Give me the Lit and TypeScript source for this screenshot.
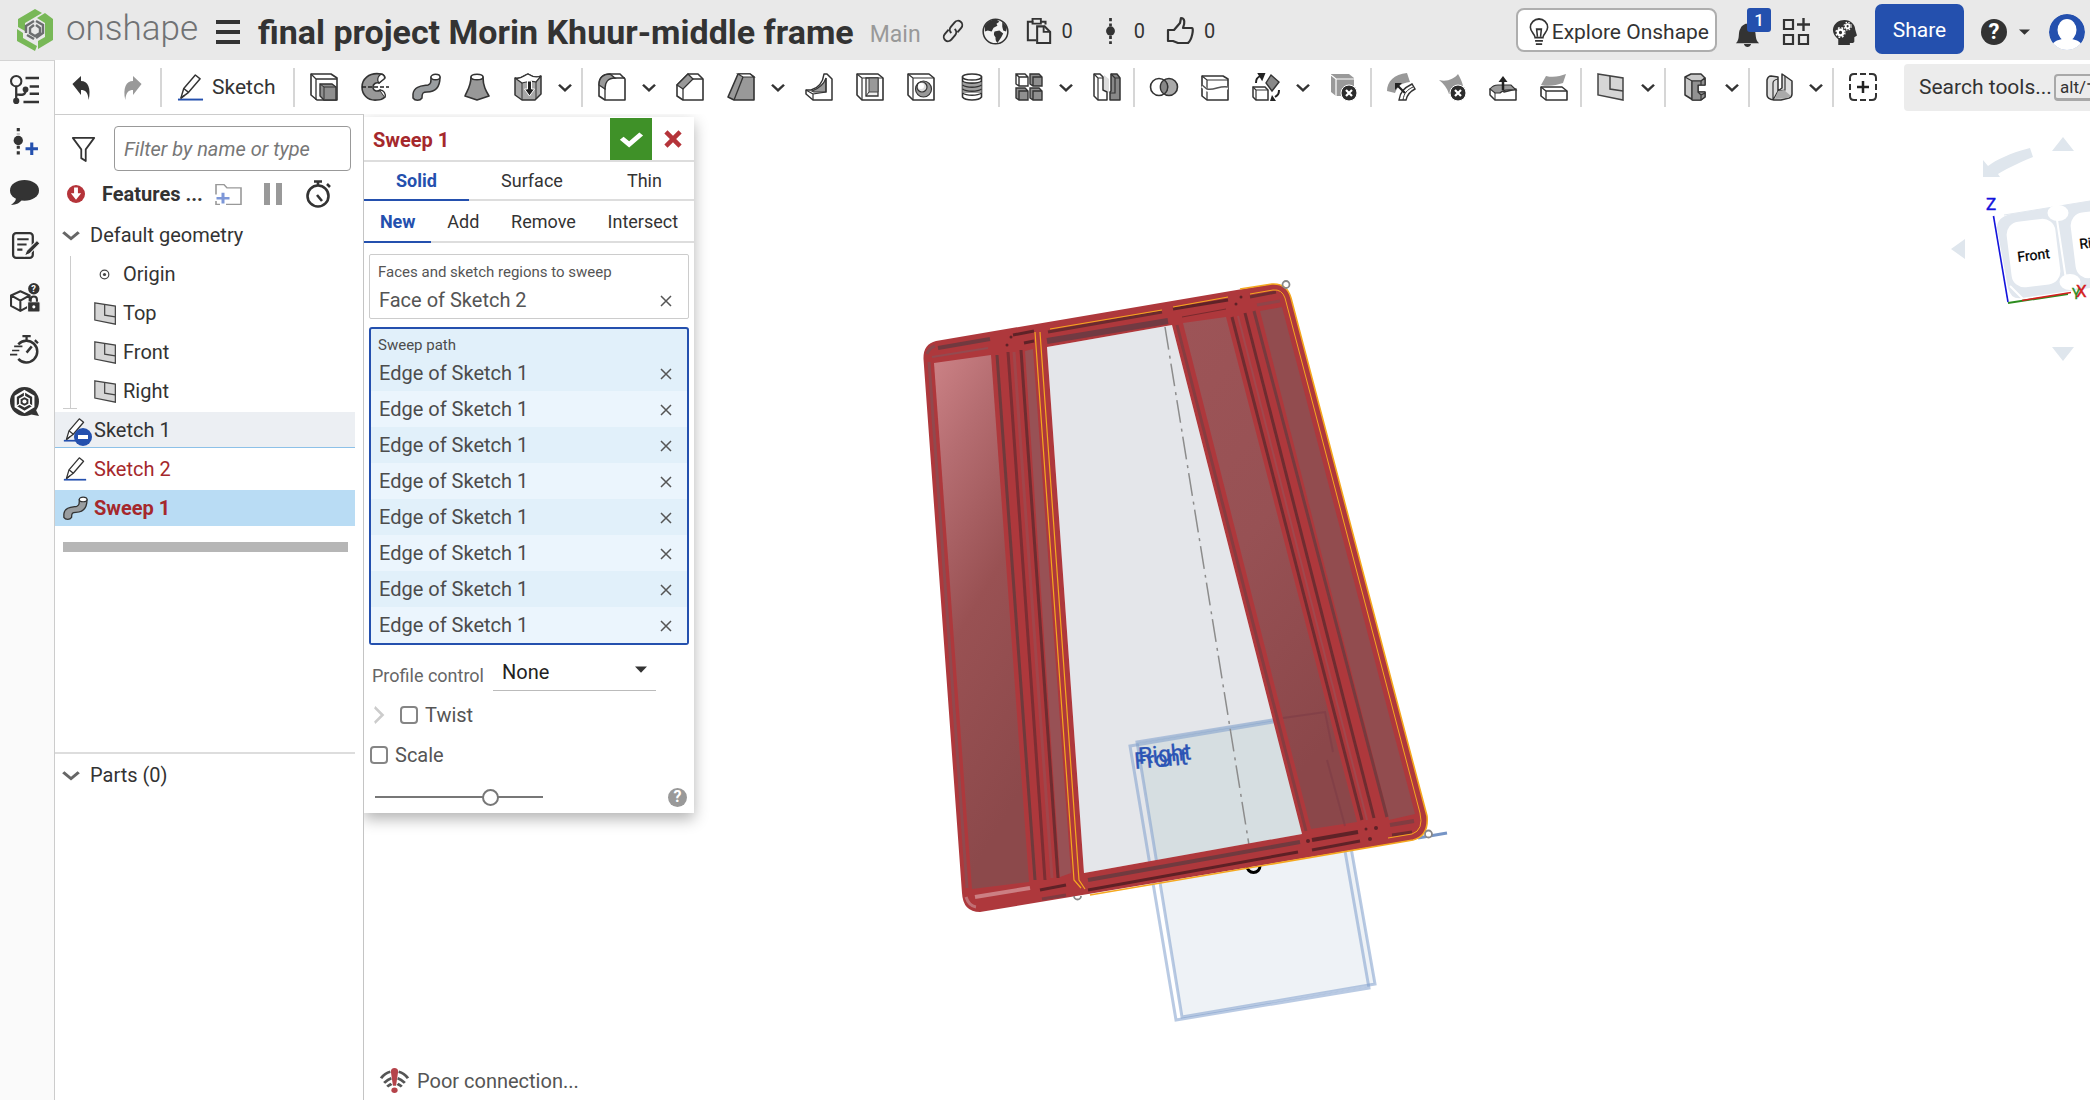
import { LitElement, html, svg, css, nothing, TemplateResult, SVGTemplateResult } from "lit";
import { customElement, state } from "lit/decorators.js";
import { classMap } from "lit/directives/class-map.js";

/* ---------- icon library (28 x 28 grid) ---------- */

const ICONS: Record<string, SVGTemplateResult> = {
  undo: svg`<path d="M4 11 14 3v5c8 0 12 7 9 19-1-8-4-10-9-10v5z" fill="#333"/>`,
  redo: svg`<path d="M24 11 14 3v5c-8 0-12 7-9 19 1-8 4-10 9-10v5z" fill="#999"/>`,
  pencil: svg`<path d="M1 26.500h26" stroke="#2450ae" stroke-width="2"/><path d="M4 25 7 15 19 1l5 4-12 14z" fill="#fff" stroke="#333" stroke-width="1.500" stroke-linejoin="round"/><path d="M7 15l5 4M4 25l4-3" stroke="#333" stroke-width="1.500"/>`,
  extrude: svg`<path d="M1 1h20l6 4v22H7l-6-5z" fill="#fff" stroke="#333" stroke-width="1.600" stroke-linejoin="round"/><path d="M1 1l5 5v21M6 6h21" fill="none" stroke="#333" stroke-width="1.300"/><path d="M10 11h12l4 3v13H14l-4-4z" fill="#8f8f8f" stroke="#333" stroke-width="1.400"/><path d="M10 11l4 3v12M14 14h12" fill="none" stroke="#333"/>`,
  revolve: svg`<path d="M20 1C7-1 1 7 1 14s5 14 15 13c3 0 6-1 8-3l-5-7c-3 2-7 1-7-3 0-3 3-5 6-4l6-5c0-2-2-4-4-4z" fill="#989898" stroke="#333" stroke-width="1.600"/><path d="M20 1c4 1 4 4 3 5l-5 4c-2-2-2-6 2-9z" fill="#fff" stroke="#333" stroke-width="1.300"/><path d="M19 17c4 0 6 4 5 7" fill="#fff" stroke="#333" stroke-width="1.300"/><path d="M1 14h27" stroke="#222" stroke-width="1.600" stroke-dasharray="4 2"/>`,
  sweep: svg`<path d="M19 4c0 5 0 7-3 8-6 1-14 1-15 9v4c2 3 7 3 9 0 0-5 1-6 5-6 9 0 13-6 13-15z" fill="#999da0" stroke="#333" stroke-width="1.500" stroke-linejoin="round"/><ellipse cx="23.500" cy="4" rx="4.500" ry="2.700" fill="#fff" stroke="#333" stroke-width="1.400"/>`,
  loft: svg`<path d="M8 4c0 9-4 14-6 19l12 4 12-4C23 18 20 13 20 4z" fill="#989898" stroke="#333" stroke-width="1.600" stroke-linejoin="round"/><ellipse cx="14" cy="4" rx="6" ry="2.800" fill="#fff" stroke="#333" stroke-width="1.500"/>`,
  thicken: svg`<path d="M1 5c6 2 9-3 13-4 3 2 8 4 13 2v18l-6 6H8l-7-5z" fill="#a8a8a8" stroke="#333" stroke-width="1.500" stroke-linejoin="round"/><path d="M1 5c6 2 9-3 13-4 3 2 8 4 13 2l-5 6c-5-2-8 0-14 1z" fill="#fff" stroke="#333" stroke-width="1.200"/><path d="M8 10v17M22 9v17" stroke="#333"/><path d="M13.500 8h4v8h3l-5 7-5-7h3z" fill="#222" stroke="#fff" stroke-width="1"/>`,
  fillet: svg`<path d="M1 12C1 4 6 1 12 1h10l5 5v21H7l-6-4z" fill="#fff" stroke="#333" stroke-width="1.600" stroke-linejoin="round"/><path d="M1 12C1 4 6 1 12 1l5 4c-7 0-10 4-10 11z" fill="#999" stroke="#333" stroke-width="1.300"/><path d="M7 15v12M16 5h11" stroke="#333" stroke-width="1.300"/>`,
  chamfer: svg`<path d="M1 12 12 1h10l5 5v21H7l-6-4z" fill="#fff" stroke="#333" stroke-width="1.600" stroke-linejoin="round"/><path d="M1 12 12 1l5 5L7 16z" fill="#999" stroke="#333" stroke-width="1.300"/><path d="M7 15v12M16 6h11" stroke="#333" stroke-width="1.300"/>`,
  draft: svg`<path d="M1 24 11 1h12l4 3v23H7z" fill="#999" stroke="#333" stroke-width="1.600" stroke-linejoin="round"/><path d="M11 1l5 3h11l-4-3z" fill="#fff" stroke="#333" stroke-width="1.200"/><path d="M16 4 7 27" stroke="#333" stroke-width="1.300"/>`,
  rib: svg`<path d="M19 1l3 0 5 5v21H8l-7-6v-4h5C13 15 18 9 19 1z" fill="#fff" stroke="#333" stroke-width="1.500" stroke-linejoin="round"/><path d="M7 18c8-3 12-7 14-13v14H9z" fill="#999" stroke="#333" stroke-width="1.200"/><path d="M8 27v-6l13-2V5M1 17l7 4" fill="none" stroke="#333" stroke-width="1.200"/>`,
  shell: svg`<path d="M1 1h21l5 4v22H6l-5-5z" fill="#fff" stroke="#333" stroke-width="1.600" stroke-linejoin="round"/><path d="M1 1l5 4v22M6 5h21" fill="none" stroke="#333" stroke-width="1.200"/><path d="M10 5h12v18H10z" fill="#eee" stroke="#333" stroke-width="1.300"/><path d="M13 5h9v14h-9z" fill="#999" stroke="#444"/><path d="M10 23l3-4" stroke="#333"/>`,
  hole: svg`<path d="M1 1h21l5 4v22H6l-5-5z" fill="#fff" stroke="#333" stroke-width="1.600" stroke-linejoin="round"/><path d="M1 1l5 4v22M6 5h21" fill="none" stroke="#333" stroke-width="1.200"/><circle cx="16.500" cy="16" r="8" fill="#999" stroke="#333" stroke-width="1.200"/><circle cx="15" cy="14" r="5" fill="#ddd" stroke="#333" stroke-width="1.200"/><circle cx="14" cy="13" r="3" fill="#fff"/>`,
  thread: svg`<path d="M4.500 4v20c3 4 16 4 19 0V4z" fill="#fff" stroke="#333" stroke-width="1.600"/><path d="M4.500 9h19v11h-19z" fill="#a0a0a0"/><path d="M4.500 8c4 3 15 3 19 0M4.500 12c4 3 15 3 19 0M4.500 16c4 3 15 3 19 0M4.500 20c4 3 15 3 19 0" fill="none" stroke="#333" stroke-width="1.500"/><ellipse cx="14" cy="4" rx="9.500" ry="3" fill="#fff" stroke="#333" stroke-width="1.500"/>`,
  pattern: svg`<path d="M1 1h9l3 3v9H4l-3-2z" fill="#fff"/><path d="M15 1h9l3 3v9h-9l-3-2zM1 15h9l3 3v9H4l-3-2zM15 15h9l3 3v9h-9l-3-2z" fill="#8f8f8f"/><path d="M1 1h9l3 3v9H4l-3-2zM4 13V4h9M1 1l3 3M15 1h9l3 3v9h-9l-3-2zM18 13V4h9M1 15h9l3 3v9H4l-3-2zM4 27v-9h9M15 15h9l3 3v9h-9l-3-2zM18 27v-9h9" fill="none" stroke="#333" stroke-width="1.400"/>`,
  mirror: svg`<path d="M11 2l5 4v14l-5-4z" fill="#ddd"/><path d="M1 1h6l3 3v13l4 2v8H5l-4-4z" fill="#fff" stroke="#333" stroke-width="1.500" stroke-linejoin="round"/><path d="M1 1l4 4v22M5 5h5" fill="none" stroke="#333" stroke-width="1.200"/><path d="M18 1h6l3 4v22H17v-8l1-1z" fill="#888" stroke="#333" stroke-width="1.500" stroke-linejoin="round"/><path d="M18 1l4 4v15l-5 0M22 5h5" fill="none" stroke="#333" stroke-width="1.200"/>`,
  boolean: svg`<circle cx="19" cy="14" r="8.500" fill="#aaa" stroke="#333" stroke-width="1.600"/><circle cx="9" cy="14" r="8.500" fill="#fff" stroke="#333" stroke-width="1.600"/><path d="M14 7a8.500 8.500 0 0 1 0 14 8.500 8.500 0 0 1 0-14z" fill="#888" stroke="#333" stroke-width="1.400"/>`,
  split: svg`<path d="M1 3h21l5 3v21H6l-5-4z" fill="#fff" stroke="#333" stroke-width="1.600" stroke-linejoin="round"/><path d="M1 3l5 4h21M6 7v20" fill="none" stroke="#333" stroke-width="1.200"/><path d="M1 13l5 4c7 2 13-3 21-2" fill="none" stroke="#fff" stroke-width="3"/><path d="M1 12l5 4c7 2 13-4 21-2" fill="none" stroke="#555" stroke-width="1.500"/>`,
  transform: svg`<path d="M1 14h12l3 3v10H4l-3-3z" fill="#fff" stroke="#333" stroke-width="1.500"/><path d="M1 14l3 3v10M4 17h12" fill="none" stroke="#333" stroke-width="1.200"/><path d="M19 2l8 7-7 9-6-8z" fill="#888" stroke="#333" stroke-width="1.400"/><path d="M4 10c0-4 1-5 4-7M7 1l5 0-2 5zM27 17c0 4-1 5-4 7" fill="none" stroke="#222" stroke-width="2"/><path d="M6 0h6l-2 6zM24 28h-6l2-6z" fill="#222"/>`,
  deletepart: svg`<path d="M1 1h18l5 4v18H6l-5-4z" fill="#999" /><path d="M1 2l5 4h18M6 6v18" fill="none" stroke="#fff" stroke-width="1.200"/><circle cx="19" cy="20" r="8" fill="#2c2c2c" stroke="#fff"/><path d="M16 17l6 6M22 17l-6 6" stroke="#fff" stroke-width="2.200"/>`,
  modfillet: svg`<path d="M0 18C0 9 7 1 20 0l3 9c-9 1-12 4-15 11z" fill="#999"/><path d="M12 27c1-8 5-12 13-16l3 5c-6 3-8 6-9 11z" fill="#fff" stroke="#333" stroke-width="1.400"/><path d="M16 27c1-7 4-10 10-13" fill="none" stroke="#333"/><path d="M18 20 11 13" stroke="#222" stroke-width="2.200"/><path d="M8 10h7l-7 7z" fill="#222"/>`,
  deleteface: svg`<path d="M1 7c8 2 15-1 19-6 4 7 6 12 5 18l-14 2C9 15 6 11 1 7z" fill="#999"/><circle cx="20" cy="20" r="8" fill="#2c2c2c" stroke="#fff"/><path d="M17 17l6 6M23 17l-6 6" stroke="#fff" stroke-width="2.200"/>`,
  moveface: svg`<path d="M1 16c6-1 10 0 14 3l12-3v11H6l-5-5z" fill="#fff" stroke="#333" stroke-width="1.500" stroke-linejoin="round"/><path d="M1 16c3-4 6-4 8-4h13l5 5c-7 0-12-1-16 3H6z" fill="#9a9a9a" stroke="#333" stroke-width="1.200"/><path d="M6 20v7" stroke="#333"/><path d="M14 17V8" stroke="#222" stroke-width="2.500"/><path d="M9.500 9 14 3l4.500 6z" fill="#222"/>`,
  replaceface: svg`<path d="M6 3c8 2 14 0 20-2l-3 9c-7 2-13 4-22 2z" fill="#9a9a9a"/><path d="M1 14h21l5 4v9H6l-5-4z" fill="#fff" stroke="#333" stroke-width="1.600" stroke-linejoin="round"/><path d="M1 14l5 4h21M6 18v9" fill="none" stroke="#333" stroke-width="1.300"/>`,
  plane: svg`<path d="M1 1l25 4v22L1 22z" fill="#d6d6d6" stroke="#444" stroke-width="1.500"/><path d="M13 3v13l13 2" fill="none" stroke="#444" stroke-width="1.500"/>`,
  frame: svg`<path d="M4 4 10 1h10l4 4v7h-7v7h7v5l-4 3h-8l-8-5z" fill="#c9c9c9" stroke="#333" stroke-width="1.500" stroke-linejoin="round"/><path d="M4 4l7 4h9l4-3M11 8v19" fill="none" stroke="#333" stroke-width="1.200"/><path d="M11 8h9l4-3v7h-7v7h7v5l-4 3h-9z" fill="#929292" stroke="#333" stroke-width="1.200" stroke-linejoin="round"/><path d="M20 8v4M20 22v5M17 19l3 3 4-2" fill="none" stroke="#333" stroke-width="1.200"/>`,
  sheet: svg`<path d="M2 7q1-4 4-4l7 1v14l4-3V1l3 2 7 5v13q0 3-3 4l-8 2H9q-7-1-7-5z" fill="#dedede" stroke="#333" stroke-width="1.500" stroke-linejoin="round"/><path d="M8 27V10q0-3 5-4M20 3v14l-7 1M8 27l5-9" fill="none" stroke="#333" stroke-width="1.200"/><path d="M13 18l6-1 7 6-3 2-13 1z" fill="#aaa"/>`,
  custom: svg`<path d="M1 8V5q0-4 4-4h3M20 1h3q4 0 4 4v3M27 20v3q0 4-4 4h-3M8 27H5q-4 0-4-4v-3M11 1h6M11 27h6M1 11v6M27 11v6" fill="none" stroke="#333" stroke-width="2"/><path d="M14 8v12M8 14h12" stroke="#222" stroke-width="2.500"/>`,
  tree: svg`<circle cx="6" cy="6" r="5" fill="none" stroke="#333" stroke-width="2"/><circle cx="6" cy="25" r="3" fill="#333"/><circle cx="15" cy="14" r="2.800" fill="#333"/><path d="M6 11v14M15 15c0 5-4 4-9 4" fill="none" stroke="#333" stroke-width="2.200"/><path d="M15 3h13M19 11h9M19 18h9M13 26h15" stroke="#333" stroke-width="2.400"/>`,
  version: svg`<path d="M8 1v6M8 18v9" stroke="#333" stroke-width="3" stroke-dasharray="3 2.500"/><circle cx="8" cy="13" r="4.500" fill="#333"/><path d="M21 15v12M15 21h12" stroke="#2450ae" stroke-width="3"/>`,
  comment: svg`<ellipse cx="14" cy="11" rx="14" ry="10" fill="#333"/><path d="M6 17c0 4-2 6-5 8 5 0 9-2 11-6z" fill="#333"/>`,
  notes: svg`<rect x="3" y="2" width="19" height="24" rx="3" fill="none" stroke="#333" stroke-width="2.200"/><path d="M7 8h11M7 13h9M7 18h5" stroke="#333" stroke-width="2"/><path d="M26 9 16 19l-2 5 5-2 10-10z" fill="#333" stroke="#fafafa"/>`,
  learn: svg`<path d="M10 8l9 4v10l-9 5-9-5V12zM1 12l9 5 9-5M10 17v10" fill="none" stroke="#333" stroke-width="2" stroke-linejoin="round"/><circle cx="23" cy="5.500" r="5.500" fill="#333"/><text x="20.500" y="9" font-size="9" font-weight="700" fill="#fff" font-family="Roboto, sans-serif">?</text><rect x="17" y="18" width="12" height="10" rx="1" fill="#333" stroke="#fafafa"/><path d="M20 18v-2c0-4 6-4 6 0v2" fill="none" stroke="#333" stroke-width="2"/><circle cx="23" cy="23" r="1.500" fill="#fff"/>`,
  fastwatch: svg`<path d="M8 9a10.500 10.500 0 1 1 0 14" fill="none" stroke="#333" stroke-width="2.400"/><path d="M12 1h8M16 1v4M24 5l3 3" stroke="#333" stroke-width="2.200"/><path d="M4 11h8M2 15h7M0 19h7" stroke="#333" stroke-width="1.600"/><path d="M21 11l-5 6" stroke="#333" stroke-width="2.400"/>`,
  assist: svg`<circle cx="14" cy="14" r="14" fill="#333"/><path d="M18 26l10 2-4-8z" fill="#333"/><path d="M14 4l8.500 5v10L14 24l-8.500-5V9z" fill="none" stroke="#fff" stroke-width="2.200"/><path d="M14 9l4.500 2.500v5L14 19l-4.500-2.500v-5z" fill="none" stroke="#fff" stroke-width="1.500"/><circle cx="14" cy="14" r="2" fill="#fff"/><path d="M14 4v5M5.500 19l4-2.500M22.500 19l-4-2.500" stroke="#fff" stroke-width="1.200"/>`,
  funnel: svg`<path d="M2 3h24L16.500 15v12l-5-3v-9z" fill="none" stroke="#333" stroke-width="2" stroke-linejoin="round"/>`,
  folderplus: svg`<path d="M2 14V2h8l3 4h14v20H12M2 22v4h4" fill="none" stroke="#999" stroke-width="1.600"/><path d="M9 12v13M2.500 18.500h13" stroke="#7d97d8" stroke-width="3"/>`,
  watch: svg`<circle cx="14" cy="16" r="10.500" fill="none" stroke="#333" stroke-width="2.600"/><path d="M10 1.500h8M14 1.500V6M23 4l3 3M13 15l5 6" stroke="#333" stroke-width="2.600"/>`,
  link: svg`<g fill="none" stroke="#333" stroke-width="2.200" transform="rotate(-50 14 14)"><path d="M12 9H5a5 5 0 0 0 0 10h7a5 5 0 0 0 5-5"/><path d="M16 19h7a5 5 0 0 0 0-10h-7a5 5 0 0 0-5 5"/></g>`,
  globe: svg`<circle cx="14" cy="14" r="12.800" fill="#f2f2f2" stroke="#333" stroke-width="1.600"/><path d="M3 8c3-4 7-7 12-6.500l3 2.500-3 2 1 2-4 2-2 4-4-1-3 1zM13 14l5-1 4 3-2 4-4 6c-2-2-2-4-2-6-2-2-2-4-1-6zM21 4l5 5-1 5-3-1-1-4z" fill="#333"/>`,
  copy: svg`<path d="M8 4H2v20h9M16 4h5v3" fill="none" stroke="#333" stroke-width="2.200"/><path d="M7 1h9v5H7z" fill="none" stroke="#333" stroke-width="2"/><path d="M12 9h8l6 6v12H12z" fill="#e9e9e9" stroke="#333" stroke-width="2.200"/><path d="M19 9v6h7" fill="none" stroke="#333" stroke-width="2"/>`,
  history: svg`<path d="M14 0v9M14 19v9" stroke="#333" stroke-width="4" stroke-dasharray="3.500 2.500"/><ellipse cx="14" cy="14" rx="6.500" ry="5" fill="#333"/>`,
  thumb: svg`<path d="M2 13h6l6-7 1-5c4 0 4 5 2 10h9c2 0 0 12-4 15H12l-5-2H2z" fill="none" stroke="#333" stroke-width="2.200" stroke-linejoin="round"/>`,
  bulb: svg`<path d="M9 20c0-4-6-6-6-11a11 9 0 0 1 22 0c0 5-6 7-6 11zM9 23.500h10M10 27h8M12 19l-1-8h6l-1 8" fill="none" stroke="#333" stroke-width="2"/>`,
  bell: svg`<path d="M1 24c5-4 2-11 5-15 1-3 4-4 6-5h4c3 1 5 3 6 6 2 5 0 10 5 14zM10 25h8c-1 4-7 4-8 0z" fill="#333"/>`,
  apps: svg`<path d="M2 2h9v9H2zM2 17h9v9H2zM17 17h9v9h-9z" fill="none" stroke="#333" stroke-width="2.200"/><path d="M21.500 0v13M15 6.500h13" stroke="#333" stroke-width="2.400"/>`,
  head: svg`<path d="M7 27v-6C3 18 1 15 1 11 2 4 8 1 14 1c7 0 12 5 12 10l2 6-3 2v4c0 2-3 2-5 2v2z" fill="#333"/><circle cx="9.500" cy="14" r="3" fill="none" stroke="#fff" stroke-width="2.400"/><circle cx="9.500" cy="14" r="5" fill="none" stroke="#fff" stroke-width="1.500" stroke-dasharray="2 2"/><circle cx="17.500" cy="7.500" r="2.200" fill="none" stroke="#fff" stroke-width="2"/><circle cx="17.500" cy="7.500" r="4" fill="none" stroke="#fff" stroke-width="1.200" stroke-dasharray="1.600 1.600"/>`,
  check: svg`<path d="M2 15l4-4 6 6L23 5l4 4-15 17z" fill="#fff"/>`,
  cross: svg`<path d="M7 3l7 7 7-7 4 4-7 7 7 7-4 4-7-7-7 7-4-4 7-7-7-7z" fill="#b5343a"/>`,
  remove: svg`<path d="M4 4l20 20M24 4 4 24" stroke="#555" stroke-width="3"/>`,
  chevron: svg`<path d="M2 8l12 12L26 8" fill="none" stroke="#333" stroke-width="5"/>`,
  chevronGrey: svg`<path d="M2 8l12 12L26 8" fill="none" stroke="#666" stroke-width="5"/>`,
  chevronRight: svg`<path d="M4 2l18 12L4 26" fill="none" stroke="#ccc" stroke-width="5"/>`,
  caret: svg`<path d="M0 5h28L14 24z" fill="#333"/>`,
  origin: svg`<circle cx="14" cy="14" r="11" fill="none" stroke="#444" stroke-width="3"/><circle cx="14" cy="14" r="4" fill="#444"/>`,
  error: svg`<circle cx="14" cy="14" r="14" fill="#b5343a"/><path d="M11 4h6v9h5l-8 10-8-10h5z" fill="#fff"/>`,
  wifi: svg`<g fill="none" stroke="#555" stroke-width="2.800"><path d="M1 11C3 8 6 5 10 4M4 16c2-2 4-4 7-5M7 20c1-1 3-2 4-3M27 11c-2-3-5-6-9-7M24 16c-2-2-4-4-7-5M21 20c-1-1-3-2-4-3"/></g><path d="M10.500 4q0-4 3.500-4t3.500 4l-2 15h-3z" fill="#b5434a"/><circle cx="14" cy="24" r="3" fill="#b5434a"/>`,
};

const icon = (name: string, w = 28, h = w, label = "") => html`<svg
  class="icon" width=${w} height=${h} viewBox="0 0 28 28" fill="none"
  preserveAspectRatio="none"
  role=${label ? "img" : "presentation"} aria-label=${label || nothing}
>${ICONS[name]}</svg>`;

const question = (extra: string) => html`<span class="question ${extra}">?</span>`;

/* ---------- toolbar model ---------- */

interface Tool { id: string; label: string; menu?: boolean; }

const TOOL_GROUPS: Tool[][] = [
  [
    { id: "extrude", label: "Extrude" }, { id: "revolve", label: "Revolve" },
    { id: "sweep", label: "Sweep" }, { id: "loft", label: "Loft" },
    { id: "thicken", label: "Thicken", menu: true },
  ],
  [
    { id: "fillet", label: "Fillet", menu: true }, { id: "chamfer", label: "Chamfer" },
    { id: "draft", label: "Draft", menu: true }, { id: "rib", label: "Rib" },
    { id: "shell", label: "Shell" }, { id: "hole", label: "Hole" },
    { id: "thread", label: "External thread" },
  ],
  [{ id: "pattern", label: "Linear pattern", menu: true }, { id: "mirror", label: "Mirror" }],
  [
    { id: "boolean", label: "Boolean" }, { id: "split", label: "Split" },
    { id: "transform", label: "Transform", menu: true }, { id: "deletepart", label: "Delete part" },
  ],
  [
    { id: "modfillet", label: "Modify fillet" }, { id: "deleteface", label: "Delete face" },
    { id: "moveface", label: "Move face" }, { id: "replaceface", label: "Replace face" },
  ],
  [{ id: "plane", label: "Plane", menu: true }],
  [{ id: "frame", label: "Frame", menu: true }],
  [{ id: "sheet", label: "Sheet metal", menu: true }],
  [{ id: "custom", label: "Add custom features" }],
];

const RAIL = [
  ["tree", "Feature list"], ["version", "Versions and history"], ["comment", "Comments"],
  ["notes", "Release notes"], ["learn", "Part properties"], ["fastwatch", "Performance"],
  ["assist", "Assistant"],
];

/* ---------- model drawing ---------- */

const DARK = "#6f2c30";
const RED = "#ae383c";

const seg = (x1: number, y1: number, x2: number, y2: number, c: string, w: number) =>
  svg`<line x1=${x1} y1=${y1} x2=${x2} y2=${y2} stroke=${c} stroke-width=${w}/>`;

const scene = svg`
  <defs>
    <linearGradient id="faceL" x1="0" y1="0" x2="0.300" y2="1">
      <stop offset="0" stop-color="#cc8286"/><stop offset="0.220" stop-color="#b56d71"/>
      <stop offset="0.550" stop-color="#995153"/><stop offset="1" stop-color="#8c494b"/>
    </linearGradient>
    <linearGradient id="faceR" x1="0" y1="0" x2="0.400" y2="1">
      <stop offset="0" stop-color="#9d5457"/><stop offset="0.500" stop-color="#975154"/>
      <stop offset="1" stop-color="#8b474a"/>
    </linearGradient>
  </defs>
  <path d="M1047 347 1172 325 1302 834 1084 873z" fill="#e4e6ea"/>
  <path d="M1137 742 1327 710 1375 984 1182 1017z" fill="#c9d6e4" fill-opacity="0.320"/>
  <path d="M1137 742 1278 718 1302 834 1157 860z" fill="#d0dad8" fill-opacity="0.400"/>
  <g fill="none" stroke="#7f9fcc" stroke-opacity="0.550" stroke-width="3">
    <path d="M1130 746 1321 714 1369 988 1176 1020z"/>
    <path d="M1137 742 1327 711 1375 984 1182 1017z"/>
  </g>
  <line x1="1418" y1="838" x2="1447" y2="833" stroke="#7695c6" stroke-width="3"/>
  <path d="M1247 866a6.500 6.500 0 0 0 13 0" fill="none" stroke="#000" stroke-width="3"/>
  <line x1="1165" y1="327" x2="1249" y2="845" stroke="#8c8c8c" stroke-width="1.500" stroke-dasharray="23 6 3 5"/>
  <g fill="#2b54b5" font-family="Roboto, 'Liberation Sans', sans-serif" font-size="23" stroke="#2b54b5" stroke-width="0.300">
    <text transform="translate(1135 769) rotate(-5)">Front</text>
    <text transform="translate(1139 764) rotate(-5)">Right</text>
  </g>
  <path fill-rule="evenodd" fill=${RED}
    d="M923.500 359Q923 344 936 341L1272 284Q1287 283 1291 298L1427 816Q1429 836 1413 840L980 912Q963 912 962 893z
       M1047 347 1084 873 1302 834 1172 325z"/>
  <path d="M934 363 991 355 1029 882 972 889z" fill="url(#faceL)"/>
  <path d="M1025 351 1033 349 1071 873 1060 877z" fill="#985155"/>
  <path d="M1183 323 1226 317 1357 822 1311 829z" fill="url(#faceR)"/>
  <path d="M1260 311 1282 307 1415 814 1389 820z" fill="#924c4f"/>
  <path d="M1283 718 1325 712 1333 752 M1327 760 1345 826" stroke="#7d3c46" stroke-opacity="0.600" stroke-width="2" fill="none"/>
  ${seg(929, 362, 967, 888, "#91494e", 3)}
  ${seg(997, 355, 1035, 880, "#6f3a3c", 3)}
  ${seg(1008, 352, 1045, 880, "#7c2e33", 3)}
  ${seg(1014, 352, 1052, 878, "#a0464b", 3)}
  ${seg(1021, 350, 1058, 878, DARK, 3)}
  ${seg(1177, 325, 1306, 831, "#873c40", 3)}
  ${seg(1232, 317, 1362, 820, DARK, 3)}
  ${seg(1238, 316, 1367, 820, "#a0484e", 2)}
  ${seg(1245, 313, 1374, 818, DARK, 3)}
  ${seg(1254, 311, 1387, 817, "#773a3e", 3)}
  ${seg(938, 348, 990, 339, "#71393f", 4)}
  ${seg(932, 357, 988, 348, "#944a50", 2)}
  ${seg(1013, 335, 1034, 331, "#5f2227", 3)}
  ${seg(1024, 343, 1034, 341, "#5f2227", 3)}
  ${seg(1047, 341, 1168, 321, "#713a42", 6)}
  ${seg(1048, 332, 1162, 312, "#6b2a2e", 3)}
  ${seg(1173, 309, 1228, 300, "#5f2227", 3)}
  ${seg(1182, 317, 1226, 309, "#7a2a2e", 1)}
  ${seg(1250, 297, 1276, 292, "#6f2c30", 3)}
  ${seg(1257, 305, 1280, 301, "#904449", 3)}
  ${seg(1088, 880, 1300, 842, "#713a3f", 4)}
  ${seg(1088, 890, 1298, 852, "#5f2025", 3)}
  ${seg(1312, 840, 1358, 832, "#5f2227", 4)}
  ${seg(1312, 850, 1360, 841, "#5f2227", 3)}
  ${seg(1040, 890, 1066, 885, "#5f2227", 3)}
  ${seg(1042, 899, 1066, 895, "#7f3a40", 3)}
  ${seg(1390, 825, 1414, 821, "#823c41", 4)}
  ${seg(1392, 835, 1412, 832, "#6f2c30", 3)}
  ${seg(975, 897, 1030, 888, "#cc7f83", 4)}
  <g fill="#5f2227">
    <circle cx="1366" cy="829" r="1.500"/><circle cx="1376" cy="828" r="2"/><circle cx="1370" cy="839" r="2"/>
    <circle cx="1007" cy="345" r="1.500"/><circle cx="1011" cy="337" r="1.500"/><circle cx="1241" cy="297" r="1.500"/>
    <circle cx="1236" cy="304" r="1.500"/><circle cx="1308" cy="841" r="2"/>
  </g>
  <path d="M966 897q3 9 10 10" fill="none" stroke="#c07075" stroke-width="3"/>
  <path d="M927 354q2-6 8-8" fill="none" stroke="#8c474c" stroke-width="3"/>
  <g fill="none" stroke="#f5a81f" stroke-width="1.600">
    <path d="M1240 289 1272 284Q1287 283 1291 298L1427 816Q1429 836 1413 840L1090 895"/>
    <path d="M1250 294 1273 290Q1282 289 1285 298L1309 389 1420 813Q1424 830 1412 834L1388 838" stroke-width="1"/>
    <path d="M1050 329 1162 310M1173 307 1228 297M1035 332 1074 880 1081 888M1040 332 1079 880 1085 889" stroke-width="1.200"/>
  </g>
  <g fill="none" stroke="#888" stroke-width="1.800">
    <circle cx="1286" cy="284.500" r="3.500"/><circle cx="1428.500" cy="834" r="3.500" fill="#fff"/>
    <path d="M1074 896a3.500 3.500 0 0 0 7 0"/>
  </g>`;

const viewCube = svg`
  <g fill="#dfe6ed">
    <path d="M133 27l11 14h-22zM133 251l11-14h-22zM21 139l14-10v20z"/>
    <path d="M100 38l3 9C86 54 74 60 68 64l2 3-17 0V50l5 6C66 50 80 43 100 38z"/>
    <path d="M81 104 160 91V178L92 188Q81 190 78 178L67 118Q67 107 81 104z" fill="#e1e7ee"/>
  </g>
  <path d="M74 105 160 91" stroke="#e1e7ee" stroke-width="1"/>
  <path d="M127 110 137 176M80 176l14 14" stroke="#fff" stroke-width="2"/>
  <rect x="79" y="110" width="49" height="66" rx="13" fill="#fff" transform="rotate(-7 104 143)"/>
  <rect x="143" y="101" width="49" height="66" rx="13" fill="#fff" transform="rotate(-7 167 134)"/>
  <ellipse cx="128" cy="103" rx="10.500" ry="8" fill="#fff"/><ellipse cx="140" cy="172" rx="10.500" ry="8" fill="#fff"/>
  <g font-family="Roboto, 'Liberation Sans', sans-serif" font-size="14" fill="#000">
    <text transform="translate(88 152) rotate(-7)" stroke="#000" stroke-width="0.300">Front</text>
    <text transform="translate(150 139) rotate(-7)" stroke="#000" stroke-width="0.300">Right</text>
    <text x="56" y="100" font-size="17" fill="#1414dc" stroke="#1414dc" stroke-width="0.400">Z</text>
    <text x="142" y="189" fill="#2c8c1e" stroke="#2c8c1e" stroke-width="0.400">Y</text>
    <text x="146" y="187" font-size="17" fill="#d32020" stroke="#d32020" stroke-width="0.400">X</text>
  </g>
  <path d="M63.500 106 78 192" stroke="#1414dc" stroke-width="1.600"/>
  <path d="M78 193 138 184" stroke="#2c8c1e" stroke-width="2"/>
  <path d="M92 190.500 141 182.500" stroke="#d32020" stroke-width="1.500"/>`;

const logo = html`<svg class="logo" width="38" height="42" viewBox="0 0 38 42" aria-hidden="true">
  <g fill="#78b857"><path d="M19 0 26 4 9 14v8l-7-4v-8z"/><path d="M1 20l6 4v5l14 8-2 5L1 32z"/><path d="M21 9l8-5 8 6v21l-15 9v-8l7-4V14z"/></g>
  <g fill="none" stroke="#6c6e70" stroke-width="2.400"><path d="M18 12l-8 5v7M11 26l7 4M20 12l7 4v8l-7 5"/><path d="M18 16l-4 3v5l5 3 5-3v-5l-4-3"/></g>
</svg>`;

@customElement("app-root")
export class AppRoot extends LitElement {
  @state() private bodyType = "Solid";
  @state() private operation = "New";
  @state() private edges = Array.from({ length: 8 }, () => "Edge of Sketch 1");

  static styles = css`
    :host {
      display: flex; flex-direction: column; min-height: 100vh; overflow: hidden;
      background: #fff; color: #333;
      font-family: Roboto, "Liberation Sans", sans-serif; font-size: 20px; line-height: 24px;
    }
    *, *::before, *::after { box-sizing: border-box; }
    button, input, select { font: inherit; color: inherit; }
    button { background: none; border: 0; padding: 0; cursor: pointer; display: inline-flex; align-items: center; justify-content: center; flex: none; }
    a { color: inherit; text-decoration: none; }
    h1, h2, ul { margin: 0; padding: 0; list-style: none; font-size: inherit; font-weight: inherit; }
    .icon { display: block; flex: none; overflow: visible; }
    .question { display: inline-flex; align-items: center; justify-content: center; width: 26px; height: 26px; border-radius: 50%; background: #333; color: #fff; font-size: 22px; font-weight: 700; line-height: 1; flex: none; }
    .question.small { width: 19px; height: 19px; background: #999; font-size: 16px; }

    /* document bar */
    .bar { display: flex; align-items: center; height: 60px; background: #e9e9e9; padding: 0 5px 0 16px; white-space: nowrap; }
    .brand { display: flex; align-items: center; gap: 12px; color: #707274; font-size: 35px; font-weight: 300; line-height: 44px; width: 200px; }
    .brand span { padding-bottom: 2px; }
    .menu { width: 24px; height: 24px; flex-direction: column; justify-content: space-between; margin: 4px 18px 0 0; }
    .menu i { height: 4px; width: 100%; background: #333; }
    .title { font-size: 34px; font-weight: 700; line-height: 40px; padding-top: 4px; }
    .branch { color: #999; font-size: 23px; padding: 10px 0 0 16px; }
    .stats { display: flex; align-items: center; flex: 1; padding: 2px 0 0 20px; }
    .stat { display: inline-flex; align-items: center; gap: 10px; margin-right: 28px; }
    .stat.wide { gap: 14px; margin-right: 21px; }
    .stat.plain { margin-right: 17px; }
    .explore { height: 44px; border: 2px solid #aeaeae; border-radius: 8px; background: #fff; padding: 3px 6px 0 10px; gap: 2px; font-size: 21px; }
    .account { display: flex; align-items: center; }
    .bellbox { position: relative; margin: 6px 22px 0 18px; }
    .badge { position: absolute; left: 12px; top: -12px; width: 24px; height: 24px; border-radius: 3px; background: #2450ae; color: #fff; font-size: 17px; font-weight: 500; line-height: 24px; text-align: center; }
    .apps { margin: 4px 22px 0 0; }
    .head { margin: 4px 18px 0 0; }
    .share { width: 89px; height: 50px; margin: 0 17px 2px 0; border-radius: 7px; background: #2450ae; color: #fff; font-size: 21px; padding-top: 2px; }
    .help { gap: 12px; padding-top: 4px; margin-right: 19px; }
    .avatar { width: 36px; height: 36px; border-radius: 50%; overflow: hidden; margin-top: 4px; }

    /* frame */
    .body { display: flex; flex: 1; min-height: 0; }
    .rail { width: 55px; flex: none; background: #fafafa; border-right: 1px solid #ccc; border-top: 1px solid #d4d4d4; padding-top: 2px; display: flex; flex-direction: column; }
    .rail button { height: 52px; padding-right: 5px; }
    .main { flex: 1; min-width: 0; display: flex; flex-direction: column; }
    .tools { display: flex; align-items: center; height: 54px; overflow: hidden; white-space: nowrap; }
    .tools button { width: 51px; height: 48px; }
    .tools .more { width: 27px; padding-right: 4px; }
    .tools .step { width: 52px; }
    .tools .sketch { width: 127px; gap: 8px; justify-content: flex-start; padding-left: 12px; font-size: 21px; }
    .rule { width: 2px; height: 39px; background: #d6d6d6; margin: 0 3px 0 1px; flex: none; }
    .search { display: flex; align-items: center; flex: 1 0 186px; height: 47px; margin-left: 16px; background: #ececec; border-radius: 4px 0 0 4px; padding-left: 15px; overflow: hidden; }
    .search label { font-size: 21px; flex: none; width: 135px; }
    .key { border: 2px solid #a8a8a8; border-bottom-width: 3px; border-radius: 4px; font-size: 17px; line-height: 22px; padding: 0 4px; flex: none; }

    .work { display: flex; flex: 1; min-height: 0; }
    .tree { width: 309px; flex: none; border-top: 1px solid #ccc; border-right: 1px solid #c4c4c4; display: flex; flex-direction: column; }
    .features { flex: 13 1 0; }
    .filter { display: flex; align-items: center; gap: 18px; padding: 11px 12px 0 16px; }
    .filter input { flex: 1; min-width: 0; height: 45px; border: 1px solid #999; border-radius: 4px; padding: 0 9px; outline: 0; }
    .filter input::placeholder { font-style: italic; color: #777; opacity: 1; }
    .heading { display: flex; align-items: center; height: 36px; margin: 5px 0 5px; padding-left: 12px; font-weight: 700; }
    .heading span { margin: 0 11px 0 17px; }
    .heading button { margin-right: 22px; }
    .pause { width: 18px; height: 22px; border: solid #999; border-width: 0 6px; }
    .list { display: grid; gap: 3px; margin-right: 8px; }
    .row { display: flex; align-items: center; height: 36px; padding-left: 8px; gap: 7px; width: 100%; justify-content: flex-start; }
    .group { gap: 10px; padding-left: 7px; }
    .children { position: relative; display: grid; gap: 3px; margin-left: 15px; border-left: 1px solid #ccc; }
    .children::after { content: ""; position: absolute; left: -8px; bottom: 0; width: 14px; border-bottom: 1px solid #ccc; }
    .children .row { padding-left: 23px; gap: 6px; }
    .children .origin { padding-left: 28px; gap: 13px; }
    .used { background: #eceff3; border-bottom: 1px solid #8dc1e8; }
    .marker { position: relative; display: block; }
    .marker::after { content: ""; position: absolute; left: 11px; top: 10px; width: 18px; height: 18px; border-radius: 50%; background: linear-gradient(#fff, #fff) center / 10px 4px no-repeat #2450ae; }
    .bad { color: #a5282c; }
    .active { background: #b9dcf4; font-weight: 700; }
    .rollback { height: 10px; background: #b6b6b6; margin: 16px 15px 0 8px; }
    .parts { flex: 7 1 0; border-top: 2px solid #ddd; margin-right: 8px; padding-top: 3px; }

    .view { flex: 1; position: relative; min-width: 0; overflow: hidden; }
    .scene { position: absolute; inset: 0; width: 100%; height: 100%; }
    .cube { position: absolute; right: 0; top: 0; }
    .status { position: absolute; left: 16px; bottom: 6px; display: flex; align-items: center; gap: 8px; color: #555; }

    /* feature dialog */
    .dialog { position: absolute; left: 0; top: 3px; width: 330px; background: #fff; box-shadow: 0 6px 14px rgba(0, 0, 0, 0.3); }
    .dhead { display: flex; align-items: center; height: 45px; border-bottom: 2px solid #ddd; padding-left: 9px; }
    .dhead h2 { flex: 1; color: #a5282c; font-weight: 700; font-size: 20px; padding-top: 2px; }
    .ok { width: 42px; height: 42px; background: #3f9128; }
    .cancel { width: 42px; height: 42px; }
    .tabs { display: flex; height: 39px; border-bottom: 2px solid #ddd; font-size: 18px; }
    .tabs.ops { height: 42px; }
    .tabs button { flex: 1 1 auto; padding-top: 1px; }
    .tabs .on { color: #2450ae; font-weight: 700; box-shadow: 0 2px #2450ae; }
    .box { margin: 11px 5px 8px; border: 1px solid #ccc; border-radius: 2px; color: #555; }
    .box h3 { margin: 0; font-size: 15px; font-weight: 400; line-height: 20px; padding: 7px 8px 0; }
    .pick { display: flex; align-items: center; justify-content: space-between; height: 36px; padding: 0 10px 0 9px; }
    .pick button { width: 24px; height: 24px; padding-top: 2px; }
    .focus { border: 2px solid #2450ae; border-radius: 3px; background: #e1f0fa; margin: 8px 5px 0; color: #4c4c4c; }
    .focus h3 { padding: 6px 7px 0; }
    .focus .pick { padding: 0 9px 0 8px; }
    .focus li:nth-child(even) { background: #ebf5fd; }
    .profile { display: flex; align-items: flex-end; gap: 9px; padding: 8px 0 0 8px; height: 46px; color: #666; font-size: 18px; }
    .profile label { padding-bottom: 3px; }
    .selectbox { position: relative; width: 163px; border-bottom: 1px solid #bbb; }
    .selectbox select { appearance: none; width: 100%; height: 36px; border: 0; background: none; color: #222; font-size: 20px; padding: 0 9px; }
    .selectbox .icon { position: absolute; right: 9px; top: 11px; pointer-events: none; }
    .option { display: flex; align-items: center; gap: 7px; color: #555; padding-left: 6px; }
    .option.twist { height: 48px; padding-left: 9px; }
    .option .icon { margin-right: 8px; }
    .option label { display: flex; align-items: center; gap: 7px; }
    .option input { appearance: none; width: 18px; height: 18px; margin: 0; border: 2px solid #858585; border-radius: 4px; background: #fff; }
    .option.scale { height: 32px; }
    .dfoot { display: flex; align-items: center; justify-content: space-between; padding: 10px 7px 0 11px; height: 42px; }
    .dfoot input { appearance: none; width: 168px; height: 20px; margin: 0; background: linear-gradient(#777, #777) center / 100% 2px no-repeat; }
    .dfoot input::-webkit-slider-thumb { appearance: none; width: 17px; height: 17px; border: 2px solid #777; border-radius: 50%; background: #fff; }
  `;

  private removeEdge(index: number) {
    this.edges = this.edges.filter((_, i) => i !== index);
  }

  private tabs(names: string[], current: string, pick: (n: string) => void, extra = "") {
    return html`<div class="tabs ${extra}" role="tablist">
      ${names.map((n) => html`<button role="tab" aria-selected=${n === current}
        class=${classMap({ on: n === current })} @click=${() => pick(n)}>${n}</button>`)}
    </div>`;
  }

  private renderBar() {
    return html`<header class="bar">
      <a class="brand" href="#home">${logo}<span>onshape</span></a>
      <button class="menu" aria-label="Document menu"><i></i><i></i><i></i></button>
      <h1 class="title">final project Morin Khuur-middle frame</h1>
      <a class="branch" href="#main">Main</a>
      <div class="stats">
        <button class="stat plain" aria-label="Copy link">${icon("link", 24)}</button>
        <span class="stat plain">${icon("globe", 27, 27, "Public")}</span>
        <a class="stat" href="#copies">${icon("copy", 26)}0</a>
        <a class="stat wide" href="#versions">${icon("history", 19, 26)}0</a>
        <a class="stat" href="#likes">${icon("thumb", 28)}0</a>
      </div>
      <div class="account">
        <button class="explore">${icon("bulb", 22, 26)}Explore Onshape</button>
        <button class="bellbox" aria-label="Notifications">${icon("bell", 25, 27)}<span class="badge">1</span></button>
        <button class="apps" aria-label="App store">${icon("apps", 28)}</button>
        <button class="head" aria-label="Learning">${icon("head", 25, 27)}</button>
        <button class="share">Share</button>
        <button class="help" aria-label="Help">${question("")}${icon("caret", 11, 8)}</button>
        <button class="avatar" aria-label="Account"><svg width="36" height="36" viewBox="0 0 36 36"><circle cx="18" cy="18" r="18" fill="#2450ae"/><ellipse cx="18" cy="16" rx="9.500" ry="11" fill="#fff"/><path d="M1 36c2-9 8-10 12-11h10c4 1 10 2 12 11z" fill="#fff"/></svg></button>
      </div>
    </header>`;
  }

  private renderTools() {
    return html`<div class="tools" role="toolbar">
      <button class="step" aria-label="Undo">${icon("undo", 24, 28)}</button>
      <button class="step" aria-label="Redo">${icon("redo", 24, 28)}</button>
      <span class="rule"></span>
      <button class="sketch">${icon("pencil", 27)}Sketch</button>
      ${TOOL_GROUPS.map((g) => html`<span class="rule"></span>${g.map((t) => html`
        <button aria-label=${t.label}>${icon(t.id, 28)}</button>${t.menu
          ? html`<button class="more" aria-label=${`${t.label} options`}>${icon("chevron", 14, 13)}</button>` : nothing}`)}`)}
      <div class="search"><label>Search tools...</label><span class="key">alt/⌥</span></div>
    </div>`;
  }

  private renderTree() {
    return html`<aside class="tree">
      <section class="features">
        <div class="filter">${icon("funnel", 25, 27)}<input type="text" aria-label="Filter" placeholder="Filter by name or type"></div>
        <div class="heading">${icon("error", 18)}<span>Features ...</span>
          <button aria-label="Add folder">${icon("folderplus", 28, 23)}</button>
          <button aria-label="Pause"><i class="pause"></i></button>
          <button aria-label="Regeneration times">${icon("watch", 28)}</button></div>
        <ul class="list">
          <li class="row group">${icon("chevronGrey", 18, 15)}Default geometry</li>
          <li><ul class="children">
            <li class="row origin">${icon("origin", 11)}Origin</li>
            ${["Top", "Front", "Right"].map((n) => html`<li class="row">${icon("plane", 23)}${n}</li>`)}
          </ul></li>
          <li class="row used"><span class="marker">${icon("pencil", 24)}</span>Sketch 1</li>
          <li class="row bad">${icon("pencil", 24)}Sketch 2</li>
          <li class="row bad active">${icon("sweep", 24)}Sweep 1</li>
        </ul>
        <div class="rollback"></div>
      </section>
      <section class="parts"><div class="row group">${icon("chevronGrey", 18, 15)}Parts (0)</div></section>
    </aside>`;
  }

  private pickRow(text: string, index = -1): TemplateResult {
    return html`<li class="pick">${text}<button aria-label="Remove" @click=${() => index >= 0 && this.removeEdge(index)}>${icon("remove", 14)}</button></li>`;
  }

  private renderDialog() {
    return html`<section class="dialog" role="dialog" aria-label="Sweep 1">
      <div class="dhead"><h2>Sweep 1</h2>
        <button class="ok" aria-label="Accept">${icon("check", 26, 20)}</button>
        <button class="cancel" aria-label="Cancel">${icon("cross", 22)}</button></div>
      ${this.tabs(["Solid", "Surface", "Thin"], this.bodyType, (n) => (this.bodyType = n))}
      ${this.tabs(["New", "Add", "Remove", "Intersect"], this.operation, (n) => (this.operation = n), "ops")}
      <div class="box"><h3>Faces and sketch regions to sweep</h3><ul>${this.pickRow("Face of Sketch 2")}</ul></div>
      <div class="box focus"><h3>Sweep path</h3><ul>${this.edges.map((e, i) => this.pickRow(e, i))}</ul></div>
      <div class="profile"><label for="profile">Profile control</label>
        <span class="selectbox"><select id="profile"><option>None</option></select>${icon("caret", 12, 9)}</span></div>
      <div class="option twist">${icon("chevronRight", 12, 18)}<label><input type="checkbox">Twist</label></div>
      <div class="option scale"><label><input type="checkbox">Scale</label></div>
      <div class="dfoot"><input type="range" min="0" max="100" value="71" aria-label="Preview opacity">
        <button aria-label="Sweep help">${question("small")}</button></div>
    </section>`;
  }

  render() {
    return html`${this.renderBar()}
      <div class="body">
        <nav class="rail">${RAIL.map(([id, label]) => html`<button aria-label=${label}>${icon(id, 29)}</button>`)}</nav>
        <div class="main">
          ${this.renderTools()}
          <div class="work">
            ${this.renderTree()}
            <main class="view">
              <svg class="scene" viewBox="364 114 1726 986" role="img" aria-label="Part model">${scene}</svg>
              <svg class="cube" width="160" height="270" viewBox="0 4 160 270" role="img" aria-label="View cube">${viewCube}</svg>
              ${this.renderDialog()}
              <div class="status">${icon("wifi", 29, 26)}Poor connection...</div>
            </main>
          </div>
        </div>
      </div>`;
  }
}
